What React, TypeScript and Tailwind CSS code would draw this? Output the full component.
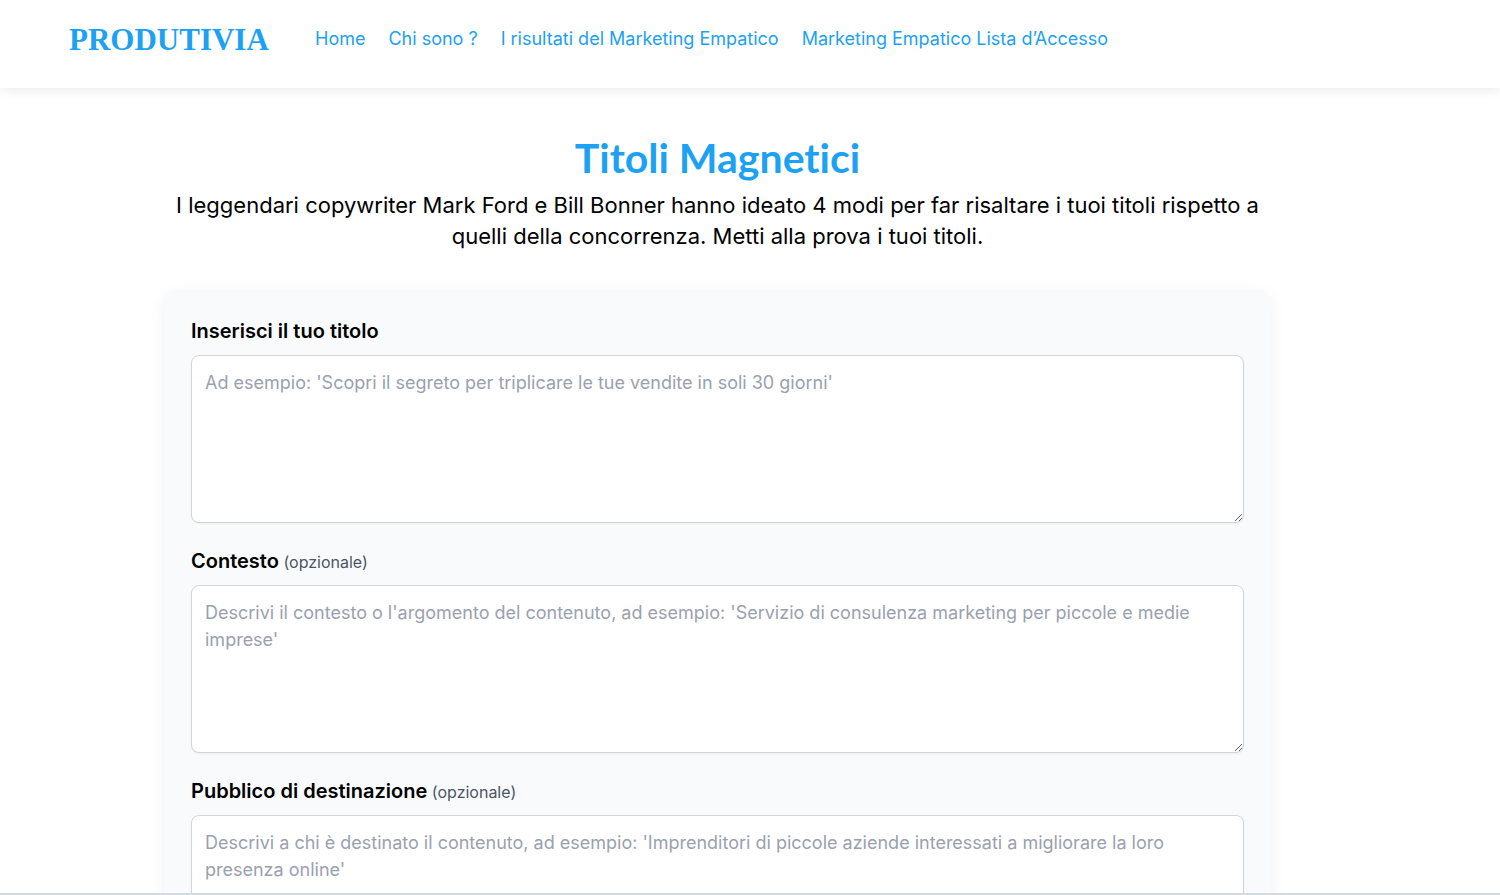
const links = [
  "Home",
  "Chi sono ?",
  "I risultati del Marketing Empatico",
  "Marketing Empatico Lista d’Accesso",
];

interface Field {
  id: string;
  label: string;
  optional?: boolean;
  placeholder: string;
}

const fields: Field[] = [
  {
    id: "titolo",
    label: "Inserisci il tuo titolo",
    placeholder:
      "Ad esempio: 'Scopri il segreto per triplicare le tue vendite in soli 30 giorni'",
  },
  {
    id: "contesto",
    label: "Contesto",
    optional: true,
    placeholder:
      "Descrivi il contesto o l'argomento del contenuto, ad esempio: 'Servizio di consulenza marketing per piccole e medie imprese'",
  },
  {
    id: "pubblico",
    label: "Pubblico di destinazione",
    optional: true,
    placeholder:
      "Descrivi a chi è destinato il contenuto, ad esempio: 'Imprenditori di piccole aziende interessati a migliorare la loro presenza online'",
  },
];

export default function App() {
  return (
    <div className="flex h-screen flex-col overflow-hidden border-b-2 border-[#d3dadd] bg-white font-['Inter',sans-serif] text-black">
      <Header />
      <main className="min-h-0 flex-1 overflow-hidden pt-10 pr-[65px]">
        <div className="mx-auto max-w-[1107px]">
          <h1 className="mb-[2px] text-center font-['Lato',sans-serif] text-[41px] leading-[60px] font-bold text-[#1da1f2] [font-variant-ligatures:none]">
            Titoli Magnetici
          </h1>
          <p className="text-center text-[22px] leading-[31px]">
            I leggendari copywriter Mark Ford e Bill Bonner hanno ideato 4 modi
            per far risaltare i tuoi titoli rispetto a quelli della concorrenza.
            Metti alla prova i tuoi titoli.
          </p>
          <form className="mt-[38px] space-y-6 rounded-xl bg-[#f9fafc] p-[27px] shadow-[0_4px_16px_rgba(0,0,0,0.06)]">
            {fields.map((field) => (
              <FormField key={field.id} {...field} />
            ))}
          </form>
        </div>
      </main>
    </div>
  );
}

// === HEADER ===
function Header() {
  return (
    <header className="relative flex h-[88px] shrink-0 items-start pt-5 pl-[69px] text-[#1da1f2] shadow-[0_1px_12px_rgba(0,0,0,0.1)]">
      <a
        href="#"
        className="w-[200px] font-['Liberation_Serif',serif] text-[31px] leading-10 font-bold"
      >
        PRODUTIVIA
      </a>
      <nav className="ml-[46px] flex gap-[23px] text-[18px] leading-[38px] whitespace-nowrap">
        {links.map((link) => (
          <a key={link} href="#">
            {link}
          </a>
        ))}
      </nav>
    </header>
  );
}

// === FORM FIELD ===
function FormField({ id, label, optional, placeholder }: Field) {
  return (
    <div>
      <label
        htmlFor={id}
        className="mb-[10px] block text-[20px] leading-7 font-semibold"
      >
        {label}
        {optional && (
          <span className="text-[16px] leading-5 font-normal text-gray-600">
            {" "}
            (opzionale)
          </span>
        )}
      </label>
      <textarea
        id={id}
        placeholder={placeholder}
        className="block h-[168px] w-full resize-y rounded-lg border border-gray-300 bg-white p-[13px] text-[18px] leading-[27px] shadow-xs placeholder:text-gray-400"
      />
    </div>
  );
}
